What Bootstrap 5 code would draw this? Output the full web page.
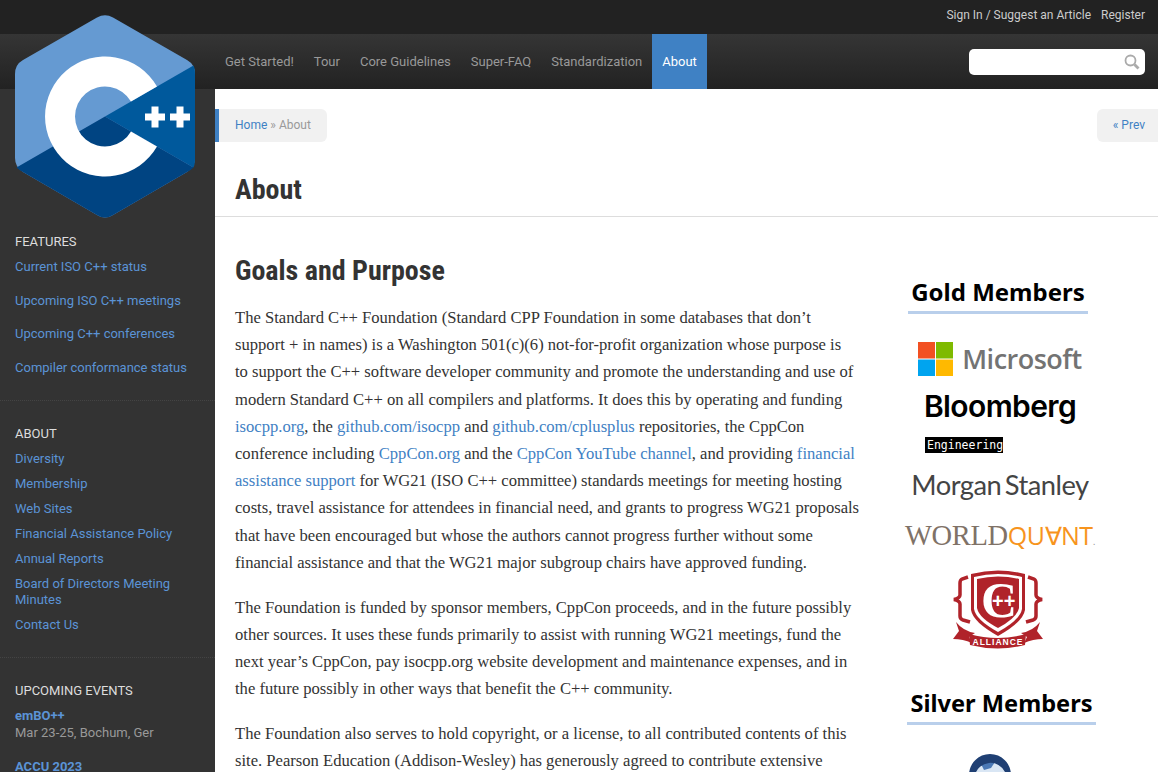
<!DOCTYPE html>
<html lang="en">
<head>
  <meta charset="UTF-8">
  <meta name="viewport" content="width=device-width, initial-scale=1.0">
  <title>About : Standard C++</title>
  <link rel="stylesheet" href="https://cdn.jsdelivr.net/npm/bootstrap@5.3.0/dist/css/bootstrap.min.css">
<style>
html, body { height: 772px; overflow: hidden; }
body { font-family: Roboto, sans-serif; font-size: 13px; background: #fff; position: relative; }
a { text-decoration: none; color: #3f81c4; }

/* top bars */
.top-strip { height: 34px; background: #222; padding: 0 13px 4px 0; }
.top-strip a { color: #ccc; font-size: 12px; margin-left: 10px; }
.main-bar { height: 55px; background: linear-gradient(#353535, #222); padding-left: 215px; padding-right: 13px; }
.main-bar a { color: #999; padding: 0 10px; line-height: 55px; display: block; }
.main-bar a.on { background: #3f81c4; color: #fff; }
.search-box { width: 176px; height: 26px; background: #fff; border-radius: 5px; padding-right: 5px; }

.logo-mark { position: absolute; left: 15px; top: 15px; }

/* left column */
.side-col { width: 215px; height: 683px; background: #333; flex: none; padding-top: 145px; overflow: hidden; }
.side-sec { padding: 0 15px 15px; border-bottom: 1px dotted #444; margin-bottom: 25px; }
.side-sec h5 { font-size: 13px; line-height: 16px; font-weight: 400; color: #ddd; margin: 0 0 9px; text-transform: uppercase; }
.side-sec a { display: block; color: #5b93d6; line-height: 16px; margin-bottom: 9px; }
.side-sec.wide { padding-bottom: 7px; }
.side-sec.wide a { margin-bottom: 17.5px; }
.side-sec a.ev { font-weight: 700; margin-bottom: 1px; }
.ev-where { color: #999; line-height: 16px; margin-bottom: 18px; }

/* page */
.page-col { flex: 1; min-width: 0; }
.crumb-row { padding-top: 20px; height: 53px; font-size: 12px; color: #999; }
.crumb-box { background: #f1f1f1; height: 33px; line-height: 33px; padding: 0 16px; }
.crumb-box.l { border-left: 4px solid #3f81c4; border-radius: 0 6px 6px 0; }
.crumb-box.r { border-radius: 6px 0 0 6px; padding-right: 13px; }
.title-row { height: 75px; border-bottom: 1px solid #ddd; padding: 31px 20px 0; }
.cond { font-family: Roboto, sans-serif; font-weight: 700; font-stretch: 75%; color: #333; font-size: 28px; line-height: 34px; margin: 0; }
.body-row { padding: 37px 20px 0; }
.article { width: 625px; flex: none; }
.article h2 { margin-bottom: 16px; }
.article p { font-family: "Liberation Serif", serif; font-size: 16.6px; line-height: 27.2px; color: #333; margin-bottom: 17.6px; }

/* sponsors */
.sponsors { width: 240px; margin-left: 20px; padding-top: 21px; text-align: center; flex: none; }
.spon-head { display: inline-block; font-family: "Noto Sans", sans-serif; font-weight: 700; font-size: 24px; line-height: 34px; color: #000; border-bottom: 3px solid #b9cfeb; padding: 0 3px 2px; margin: 0; }
.spon-head.gold { margin-left: -4px; }
.ms-row { margin-top: 27px; gap: 9px; }
.ms-logo { font-family: "Open Sans", sans-serif; font-weight: 600; font-size: 27px; line-height: 36px; color: #737373; letter-spacing: -.5px; }
.bb-logo { font-family: Inter, sans-serif; font-weight: 600; font-size: 30px; line-height: 38px; color: #000; letter-spacing: -.6px; margin-top: 10px; }
.bb-tag { font-family: "DejaVu Sans Mono", monospace; font-size: 11.5px; line-height: 16px; background: #000; color: #fff; width: 78px; margin: 12px 0 0 45px; text-align: left; padding-left: 2px; white-space: nowrap; overflow: hidden; }
.mgs-logo { font-family: Lato, sans-serif; font-weight: 400; font-size: 27.3px; line-height: 36px; color: #444; letter-spacing: -.5px; word-spacing: -3px; margin-top: 14px; }
.wq-logo { font-family: "Liberation Serif", serif; font-size: 28.5px; line-height: 30px; letter-spacing: -.3px; color: #7f7267; margin-top: 17px; white-space: nowrap; }
.wq-logo span { color: #f7941d; font-family: "Open Sans", sans-serif; font-weight: 400; font-size: 25px; letter-spacing: -.5px; }
.wq-logo small { color: #999; font-size: 10px; font-family: "Liberation Sans", sans-serif; }
.crest-wrap { margin: 8px 0 0 65px; text-align: left; height: 85px; }
.crest-wrap svg { display: block; }
.silver { margin-top: 36px; font-size: 23.6px; margin-left: 3px; }
.globe-wrap { margin: 27px 20px 0 0; }
.crest-t { font-family: "Liberation Serif", serif; font-weight: 700; fill: #fff; }
.crest-p { font-family: "Liberation Sans", sans-serif; font-weight: 700; font-size: 20px; fill: #fff; }
.crest-l { font-family: "Liberation Sans", sans-serif; font-weight: 700; font-size: 8.500px; letter-spacing: 1px; fill: #fff; }
</style>
</head>
<body>

  <div class="top-strip d-flex justify-content-end align-items-center">
    <a href="#">Sign In / Suggest an Article</a>
    <a href="#">Register</a>
  </div>

  <div class="main-bar d-flex align-items-center">
    <a href="#">Get Started!</a>
    <a href="#">Tour</a>
    <a href="#">Core Guidelines</a>
    <a href="#">Super-FAQ</a>
    <a href="#">Standardization</a>
    <a href="#" class="on">About</a>
    <div class="search-box ms-auto d-flex align-items-center justify-content-end">
      <svg width="16" height="16" viewBox="0 0 16 16" fill="none" stroke="#aaa">
        <circle cx="6.500" cy="6.500" r="5" stroke-width="1.800"/>
        <path d="M10.500 10.500l4 4" stroke-width="2.800"/>
      </svg>
    </div>
  </div>

  <!-- logo hangs over the bars and the sidebar -->
  <svg class="logo-mark" width="180" height="203" viewBox="15 15 180 203">
    <path d="M97 17.500Q105 13 113 17.500L187 60Q195 64.500 195 74V158Q195 167 187 172L113 215Q105 220 97 215L23 172Q15 167 15 158V74Q15 64.500 23 60Z" fill="#659ad2"/>
    <path d="M105 116.500L193.500 65.500Q195 68 195 74V158Q195 165 193.500 167.500Z" fill="#00599c"/>
    <path d="M105 116.500L193.500 167.500Q191 170 187 172L113 215Q105 220 97 215L23 172Q19 170 16.500 167.500Z" fill="#004482"/>
    <path d="M157 86.500A60 60 0 1 0 157 146.500L131 131.500A30 30 0 1 1 131 101.500Z" fill="#fff"/>
    <path d="M145 113.500h6.500v-7h7v7h6.500v7h-6.500v7h-7v-7h-6.500zM170 113.500h6.500v-7h7v7h6.500v7h-6.500v7h-7v-7h-6.500z" fill="#fff"/>
  </svg>

  <div class="d-flex">
    <div class="side-col">
      <div class="side-sec wide">
        <h5>Features</h5>
        <a href="#">Current ISO C++ status</a>
        <a href="#">Upcoming ISO C++ meetings</a>
        <a href="#">Upcoming C++ conferences</a>
        <a href="#">Compiler conformance status</a>
      </div>
      <div class="side-sec">
        <h5>About</h5>
        <a href="#">Diversity</a>
        <a href="#">Membership</a>
        <a href="#">Web Sites</a>
        <a href="#">Financial Assistance Policy</a>
        <a href="#">Annual Reports</a>
        <a href="#">Board of Directors Meeting Minutes</a>
        <a href="#">Contact Us</a>
      </div>
      <div class="side-sec">
        <h5>Upcoming Events</h5>
        <a href="#" class="ev">emBO++</a>
        <div class="ev-where">Mar 23-25, Bochum, Ger</div>
        <a href="#" class="ev">ACCU 2023</a>
      </div>
    </div>

    <div class="page-col">
      <div class="crumb-row d-flex justify-content-between">
        <div class="crumb-box l"><a href="#">Home</a> » About</div>
        <div class="crumb-box r"><a href="#">« Prev</a></div>
      </div>
      <div class="title-row"><h1 class="cond">About</h1></div>
      <div class="body-row d-flex">
        <div class="article">
          <h2 class="cond">Goals and Purpose</h2>
          <p>The Standard C++ Foundation (Standard CPP Foundation in some databases that don’t support + in names) is a Washington 501(c)(6) not-for-profit organization whose purpose is<br>to support the C++ software developer community and promote the understanding and use of modern Standard C++ on all compilers and platforms. It does this by operating and funding <a href="#">isocpp.org</a>, the <a href="#">github.com/isocpp</a> and <a href="#">github.com/cplusplus</a> repositories, the CppCon conference including <a href="#">CppCon.org</a> and the <a href="#">CppCon YouTube channel</a>, and providing <a href="#">financial assistance support</a> for WG21 (ISO C++ committee) standards meetings for meeting hosting costs, travel assistance for attendees in financial need, and grants to progress WG21 proposals that have been encouraged but whose the authors cannot progress further without some financial assistance and that the WG21 major subgroup chairs have approved funding.</p>
          <p>The Foundation is funded by sponsor members, CppCon proceeds, and in the future possibly other sources. It uses these funds primarily to assist with running WG21 meetings, fund the next year’s CppCon, pay isocpp.org website development and maintenance expenses, and in the future possibly in other ways that benefit the C++ community.</p>
          <p>The Foundation also serves to hold copyright, or a license, to all contributed contents of this site. Pearson Education (Addison-Wesley) has generously agreed to contribute extensive</p>
        </div>
        <div class="sponsors">
          <div class="spon-head gold">Gold Members</div>
          <div class="ms-row d-flex align-items-center justify-content-center">
            <svg width="35" height="34" viewBox="0 0 35 34">
              <rect width="17" height="16.500" fill="#f25022"/><rect x="18" width="17" height="16.500" fill="#7fba00"/>
              <rect y="17.500" width="17" height="16.500" fill="#00a4ef"/><rect x="18" y="17.500" width="17" height="16.500" fill="#ffb900"/>
            </svg>
            <span class="ms-logo">Microsoft</span>
          </div>
          <div class="bb-logo">Bloomberg</div>
          <div class="bb-tag">Engineering</div>
          <div class="mgs-logo">Morgan Stanley</div>
          <div class="wq-logo">WORLD<span>QU∀NT</span><small>.</small></div>
          <div class="crest-wrap">
            <svg width="105" height="85" viewBox="0 0 105 85" fill="#b0232a">
              <path d="M26 9Q53 2 80 9V45Q78 57 53 71Q28 57 26 45Z"/>
              <path d="M29 12Q53 6 77 12V44Q75 55 53 67Q31 55 29 44Z" fill="#fff"/>
              <path d="M32 14Q53 9 74 14V43Q72 53 53 63Q34 53 32 43Z"/>
              <text class="crest-t" x="36" y="52" font-size="50">C</text>
              <text class="crest-p" x="47" y="43">++</text>
              <path d="M23 12L17 14Q15 15 15 18V30Q15 33 9 34.500Q15 36 15 39V51Q15 54 18 55L25 57" fill="none" stroke="#b0232a" stroke-width="3.500"/>
              <path d="M83 12L89 14Q91 15 91 18V30Q91 33 97 34.500Q91 36 91 39V51Q91 54 88 55L81 57" fill="none" stroke="#b0232a" stroke-width="3.500"/>
              <path d="M11 57Q18 66 30 68L24 72L27 78Q18 74 8 74L14 66Z"/>
              <path d="M95 57Q88 66 76 68L82 72L79 78Q88 74 98 74L92 66Z"/>
              <path d="M24 69Q53 77 81 69L80 80Q53 87 25 80Z"/>
              <text class="crest-l" x="53" y="80" text-anchor="middle">ALLIANCE</text>
            </svg>
          </div>
          <div class="spon-head silver">Silver Members</div>
          <div class="globe-wrap">
            <svg width="46" height="46" viewBox="0 0 46 46">
              <circle cx="23" cy="23" r="18" fill="#d9e6f4"/>
              <path d="M14 12Q20 6 28 10L24 16L17 18Z" fill="#4a78b5"/>
              <path d="M2 23A21 21 0 0 1 44 23L38 20A16 16 0 0 0 8 23Z" fill="#1f3f73"/>
            </svg>
          </div>
        </div>
      </div>
    </div>
  </div>

  <script src="https://cdn.jsdelivr.net/npm/bootstrap@5.3.0/dist/js/bootstrap.bundle.min.js"></script>
</body>
</html>
